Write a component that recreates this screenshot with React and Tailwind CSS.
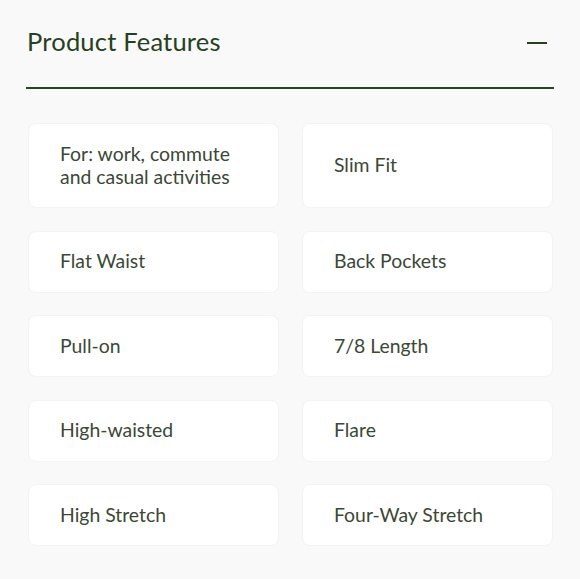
const features = [
  'For: work, commute and casual activities',
  'Slim Fit',
  'Flat Waist',
  'Back Pockets',
  'Pull-on',
  '7/8 Length',
  'High-waisted',
  'Flare',
  'High Stretch',
  'Four-Way Stretch',
];

const App = () => {
  return (
    <div className="min-h-[579px] w-[580px] bg-[#f9f9f9] px-[26px] font-['Lato',sans-serif]">
      {/* Header */}
      <div className="flex h-[89px] items-center justify-between border-b-2 border-[#2b4423] pb-[5px] pl-[1px] pr-[7px]">
        <h2 className="text-[25.5px] text-[#27401f] tracking-[0.2px]">
          Product Features
        </h2>
        <span className="mt-[3px] block h-[2px] w-[20px] bg-[#27401f]" />
      </div>

      {/* Feature cards */}
      <div className="ml-[2px] mr-[1px] mt-[34px] grid grid-cols-2 gap-x-[23px] gap-y-[22.5px]">
        {features.map((f, i) => (
          <div
            key={f}
            className={`flex items-center rounded-[8px] border border-[#f3f3f3] bg-white pb-[2px] pl-[31px] pr-[20px] ${
              i < 2 ? 'h-[85px]' : 'h-[62px]'
            }`}
          >
            <span className="text-[19.4px] leading-[23px] text-[#3b4836]">{f}</span>
          </div>
        ))}
      </div>
    </div>
  );
};

export default App;
